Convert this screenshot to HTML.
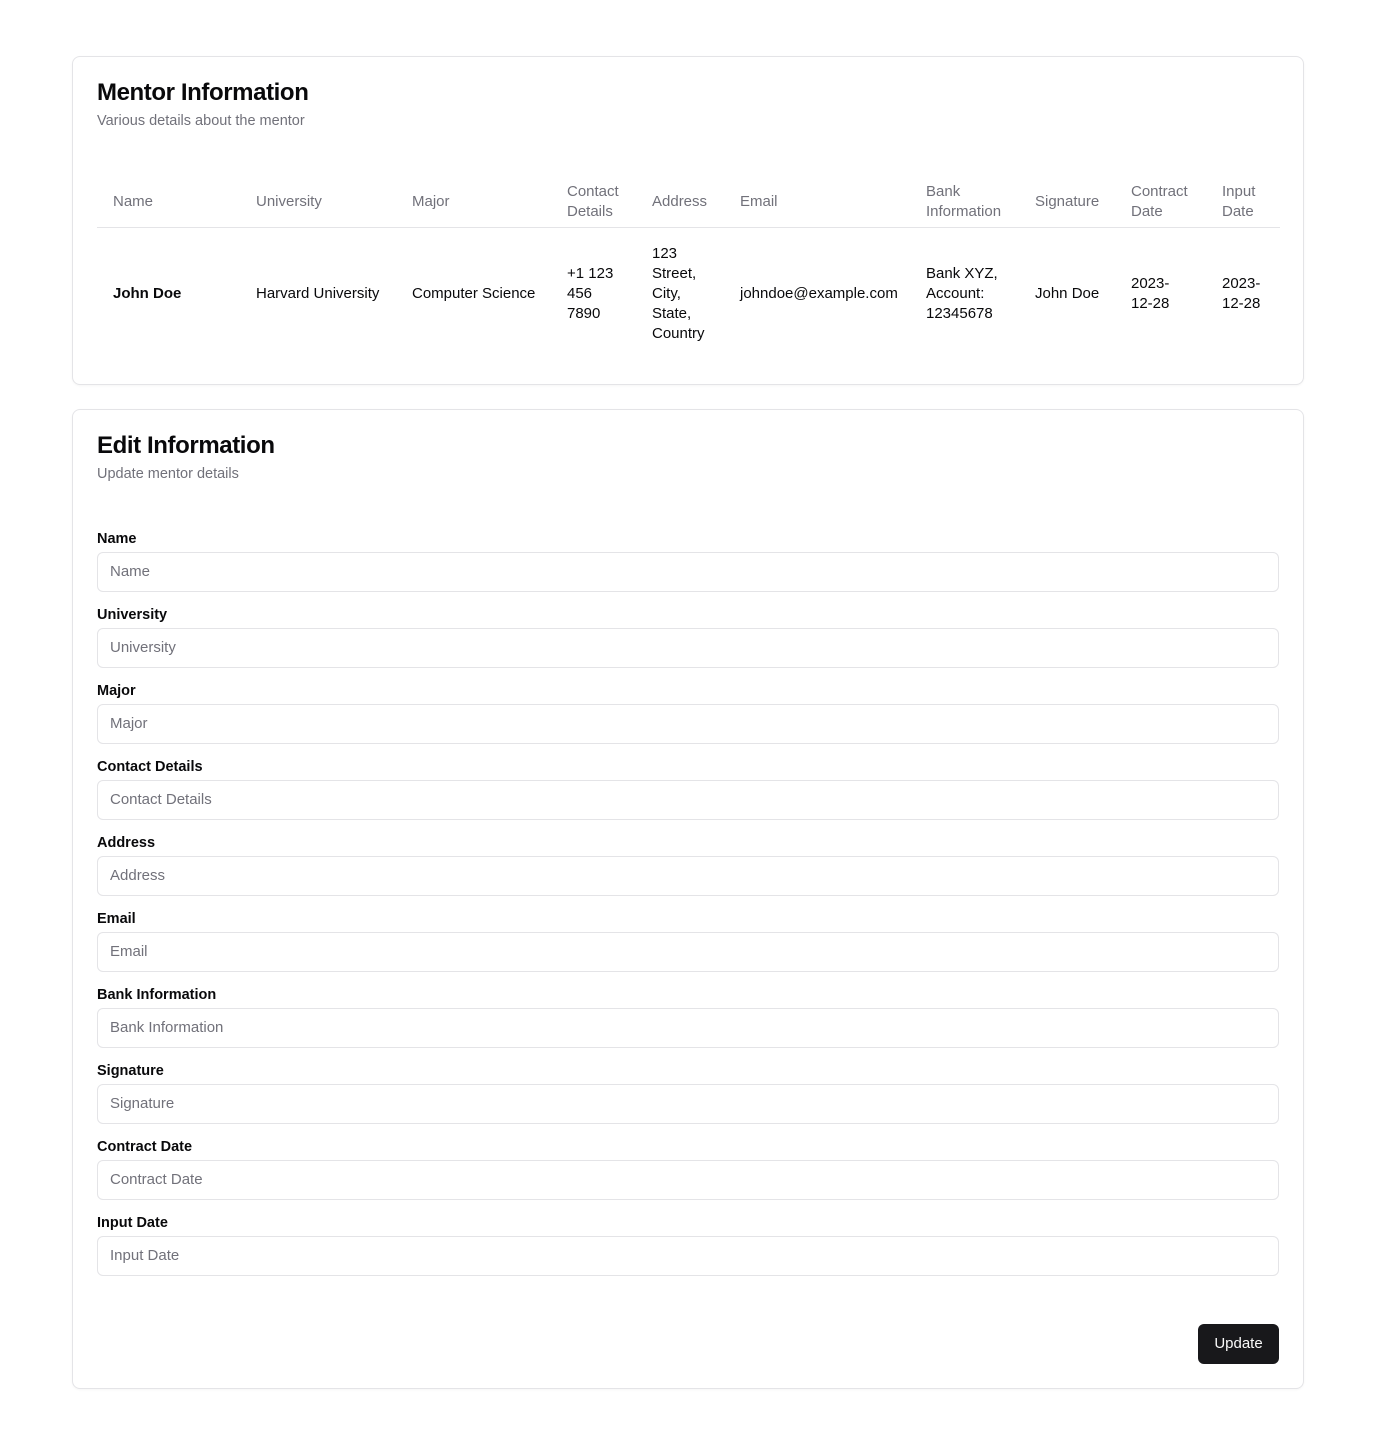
<!DOCTYPE html>
<html><head><meta charset="utf-8">
<style>
*{box-sizing:border-box;margin:0;padding:0}
body{width:1376px;height:1445px;background:#fff;font-family:"Liberation Sans",sans-serif;color:#09090b;position:relative}
.card{position:absolute;left:72px;width:1232px;border:1px solid #e4e4e7;border-radius:8px;background:#fff;box-shadow:0 1px 2px rgba(0,0,0,.04)}
h2{font-size:24px;line-height:32px;font-weight:700;letter-spacing:-0.4px;position:absolute;left:24px}
.sub{font-size:14.5px;line-height:20px;color:#71717a;position:absolute;left:24px}
table{position:absolute;left:24px;top:121px;width:1183px;border-collapse:collapse;table-layout:fixed;font-size:15px;line-height:20px}
th{font-weight:400;color:#71717a;text-align:left;padding:4px 16px;height:49px;vertical-align:middle;border-bottom:1px solid #e4e4e7;white-space:nowrap}
td{padding:16px;vertical-align:middle;white-space:nowrap;height:132px}
label{position:absolute;left:24px;font-size:14.5px;line-height:20px;font-weight:700}
.in{position:absolute;left:24px;width:1182px;height:40px;border:1px solid #e4e4e7;border-radius:6px;font-size:15px;color:#71717a;padding:0 12px;line-height:38px}
.btn{position:absolute;right:24px;bottom:24px;width:81px;height:40px;background:#18181b;color:#fafafa;border-radius:6px;font-size:15px;font-weight:400;text-align:center;line-height:40px}
</style></head><body>
<div class="card" style="top:56px;height:329px">
<h2 style="top:20px">Mentor Information</h2>
<div class="sub" style="top:54px">Various details about the mentor</div>
<table>
<colgroup><col style="width:143px"><col style="width:156px"><col style="width:155px"><col style="width:85px"><col style="width:88px"><col style="width:186px"><col style="width:109px"><col style="width:96px"><col style="width:91px"><col style="width:74px"></colgroup>
<tr><th>Name</th><th>University</th><th>Major</th><th>Contact<br>Details</th><th>Address</th><th>Email</th><th>Bank<br>Information</th><th>Signature</th><th>Contract<br>Date</th><th>Input<br>Date</th></tr>
<tr><td style="font-weight:700">John Doe</td><td>Harvard University</td><td>Computer Science</td><td>+1 123<br>456<br>7890</td><td>123<br>Street,<br>City,<br>State,<br>Country</td><td>johndoe@example.com</td><td>Bank XYZ,<br>Account:<br>12345678</td><td>John Doe</td><td>2023-<br>12-28</td><td>2023-<br>12-28</td></tr>
</table>
</div>
<div class="card" style="top:409px;height:980px">
<h2 style="top:20px">Edit Information</h2>
<div class="sub" style="top:54px">Update mentor details</div>
<label style="top:119px">Name</label><div class="in" style="top:142px">Name</div>
<label style="top:195px">University</label><div class="in" style="top:218px">University</div>
<label style="top:271px">Major</label><div class="in" style="top:294px">Major</div>
<label style="top:347px">Contact Details</label><div class="in" style="top:370px">Contact Details</div>
<label style="top:423px">Address</label><div class="in" style="top:446px">Address</div>
<label style="top:499px">Email</label><div class="in" style="top:522px">Email</div>
<label style="top:575px">Bank Information</label><div class="in" style="top:598px">Bank Information</div>
<label style="top:651px">Signature</label><div class="in" style="top:674px">Signature</div>
<label style="top:727px">Contract Date</label><div class="in" style="top:750px">Contract Date</div>
<label style="top:803px">Input Date</label><div class="in" style="top:826px">Input Date</div>
<div class="btn">Update</div>
</div>
</body></html>
